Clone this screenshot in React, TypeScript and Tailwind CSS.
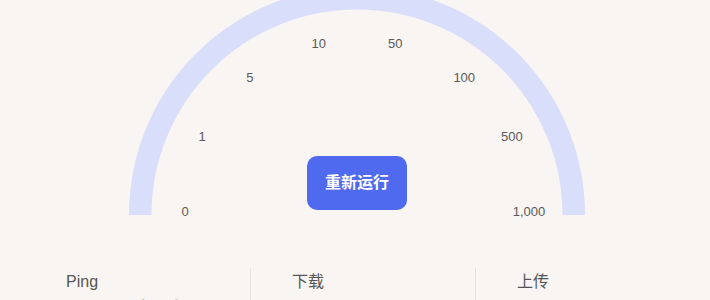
const ticks = ["0", "1", "5", "10", "50", "100", "500", "1,000"];

const CX = 357;
const CY = 211;
const LABEL_R = 172;

function Gauge() {
    return (
        <div className="relative h-[268px] w-full">
            <svg className="absolute left-0 top-0" width="710" height="240" viewBox="0 0 710 240">
                <path
                    d="M 140.25 215 A 216.75 216.75 0 0 1 573.75 215"
                    fill="none"
                    stroke="#d9defa"
                    strokeWidth="22.5"
                />
            </svg>
            {ticks.map((t, i) => {
                const a = (Math.PI * i) / (ticks.length - 1);
                const x = CX - LABEL_R * Math.cos(a);
                const y = CY - LABEL_R * Math.sin(a);
                return (
                    <span
                        key={t}
                        className="absolute -translate-x-1/2 -translate-y-1/2 whitespace-nowrap text-[13px] leading-none text-[#5a5a5a]"
                        style={{ left: x, top: y }}
                    >
                        {t}
                    </span>
                );
            })}
            <button
                type="button"
                className="absolute left-[307px] top-[156px] flex h-[54px] w-[100px] items-center justify-center rounded-[10px] bg-[#4f6aef] text-[16px] font-bold text-white"
            >
                重新运行
            </button>
        </div>
    );
}

function Stat({ label, value, first }: { label: string; value: string; first?: boolean }) {
    return (
        <div className={`flex w-[225px] shrink-0 flex-col pl-[41px] pt-[2px] ${first ? "" : "border-l border-[#e6e2de]"}`}>
            <span className="text-[16px] leading-6 text-[#555]">{label}</span>
            <span className="mt-[3px] pl-[28px] text-[28px] leading-9 text-[#333]">{value}</span>
        </div>
    );
}

export default function App() {
    return (
        <div
            className="h-[300px] w-[710px] overflow-hidden bg-[#f8f5f2]"
            style={{ fontFamily: '"Liberation Sans", "Noto Sans CJK SC", sans-serif' }}
        >
            <Gauge />
            <div className="flex pl-[25px]">
                <Stat label="Ping" value="— 毫秒" first />
                <Stat label="下载" value="— Mbps" />
                <Stat label="上传" value="— Mbps" />
            </div>
        </div>
    );
}
